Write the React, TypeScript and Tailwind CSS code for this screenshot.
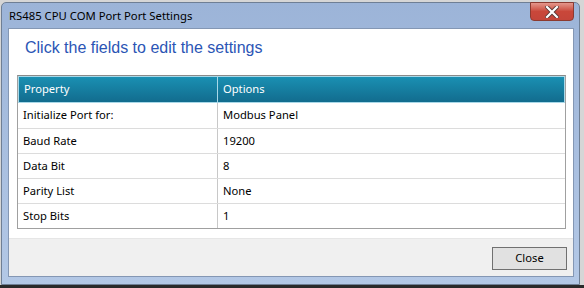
import React from 'react';

const ROWS: [string, string][] = [
  ['Initialize Port for:', 'Modbus Panel'],
  ['Baud Rate', '19200'],
  ['Data Bit', '8'],
  ['Parity List', 'None'],
  ['Stop Bits', '1'],
];

const UI_FONT = "font-['Noto_Sans','Open_Sans',sans-serif]";

const App: React.FC = () => {
  return (
    <div className="w-[584px] h-[288px] overflow-hidden bg-[#d6d6d6] flex flex-col">
      {/* Window */}
      <div className="mt-[2px] ml-[1px] w-[579px] h-[283px] flex flex-col border border-[#6f7f95] rounded-t-[5px] bg-gradient-to-b from-[#9cb4d8] to-[#b3c8e6]">
        {/* Title bar */}
        <div className="h-[25px] flex items-start relative">
          <span className={`ml-[7px] mt-[5px] text-[11.3px] leading-[16px] text-black ${UI_FONT}`}>
            RS485 CPU COM Port Port Settings
          </span>
          <button className="absolute right-[5px] top-[-1px] w-[44px] h-[19px] rounded-b-[4px] border border-[#8c3a30] bg-gradient-to-b from-[#e3968c] via-[#c9473a] to-[#c4453a] flex items-center justify-center">
            <svg width="14" height="12" viewBox="0 0 14 12">
              <path d="M2 1 L12 11 M12 1 L2 11" stroke="#5a3a38" strokeWidth="4" strokeLinecap="square" />
              <path d="M2 1 L12 11 M12 1 L2 11" stroke="#ffffff" strokeWidth="2.2" strokeLinecap="square" />
            </svg>
          </button>
        </div>

        {/* Client area */}
        <div className="ml-[6px] mr-[5px] h-[249px] border border-[#8497b4] bg-white flex flex-col">
          <div className="h-[46px] pl-[16px] pt-[9px]">
            <h1 className="text-[16px] leading-[20px] text-[#2b55b5] font-['Liberation_Sans',Arial,sans-serif]">
              Click the fields to edit the settings
            </h1>
          </div>

          <div className={`ml-[8px] w-[549px] border border-[#a0a0a0] border-t-[#8a8a8a] text-[11.2px] text-black ${UI_FONT}`}>
            <div className="h-[27px] flex bg-gradient-to-b from-[#1a90b3] to-[#126c8e] border border-[#a8d8e8] text-white">
              <div className="w-[199px] border-r border-[#a8d8e8] pl-[5px] flex items-center">Property</div>
              <div className="flex-1 pl-[5px] flex items-center">Options</div>
            </div>
            {ROWS.map(([k, v], i) => (
              <div key={k} className={`h-[25px] flex ${i > 0 ? 'border-t border-[#dcdcdc]' : ''}`}>
                <div className="w-[200px] border-r border-[#c8c8c8] pl-[5px] flex items-center">{k}</div>
                <div className="flex-1 pl-[5px] flex items-center">{v}</div>
              </div>
            ))}
          </div>

          <div className="h-[9px]" />
          <div className="flex-1 bg-[#f0f0f0] border-t border-[#e6e6e6] flex items-start justify-end pr-[6px] pt-[8px]">
            <button className={`w-[75px] h-[23px] border border-[#707070] bg-[#e1e1e1] text-[11.2px] text-black ${UI_FONT}`}>
              Close
            </button>
          </div>
        </div>
      </div>
      <div className="flex-1 bg-[#2a2a2a]" />
    </div>
  );
};

export default App;
